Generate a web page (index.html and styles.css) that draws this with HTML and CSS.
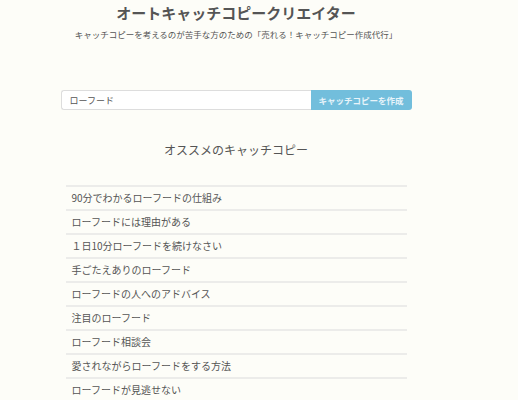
FILE: index.html
```html
<!DOCTYPE html>
<html lang="ja">
<head>
    <meta charset="UTF-8">
    <meta name="viewport" content="width=device-width, initial-scale=1.0">
    <title>オートキャッチコピークリエイター</title>
    <link rel="stylesheet" href="styles.css">
</head>
<body>
  <div class="container">
    <h1 class="title">オートキャッチコピークリエイター</h1>
    <p class="lead">キャッチコピーを考えるのが苦手な方のための「売れる！キャッチコピー作成代行」</p>

    <div class="form-group">
      <input type="text" id="keyword" value="ローフード">
      <button>キャッチコピーを作成</button>
    </div>

    <h2 class="sub-title">オススメのキャッチコピー</h2>
    <ul class="copy-list">
      <li>90分でわかるローフードの仕組み</li>
      <li>ローフードには理由がある</li>
      <li>１日10分ローフードを続けなさい</li>
      <li>手ごたえありのローフード</li>
      <li>ローフードの人へのアドバイス</li>
      <li>注目のローフード</li>
      <li>ローフード相談会</li>
      <li>愛されながらローフードをする方法</li>
      <li>ローフードが見逃せない</li>
    </ul>
  </div>
</body>
</html>
```

FILE: styles.css
```css
body {
    font-family: "Noto Sans CJK JP", "Noto Sans", sans-serif;
    background-color: #fdfdf8;
    color: #555;
    margin: 0;
    padding: 0;
}
.container {
    width: 472px;
    text-align: center;
}
.title {
    font-size: 15px;
    font-weight: bold;
    margin: 0;
    padding-top: 3px;
    line-height: 20px;
    color: #555;
}
.lead {
    font-size: 8.5px;
    margin: 5px 0 0;
    line-height: 12px;
    color: #555;
}
.form-group {
    display: flex;
    width: 351px;
    margin: 50px auto 0;
}
input {
    flex: 1;
    height: 20px;
    box-sizing: border-box;
    padding: 0 8px;
    font-family: inherit;
    font-size: 9px;
    color: #555;
    border: 1px solid #ddd;
    border-right: none;
    border-radius: 3px 0 0 3px;
    background: #fff;
}
button {
    width: 101px;
    height: 20px;
    background-color: #72bedc;
    color: #e8f4fa;
    font-family: inherit;
    font-size: 8.5px;
    font-weight: bold;
    border: none;
    border-radius: 0 3px 3px 0;
    padding: 0;
}
.sub-title {
    font-size: 12px;
    font-weight: normal;
    margin: 32px 0 0;
    line-height: 16px;
}
.copy-list {
    list-style: none;
    width: 341px;
    margin: 27px auto 0;
    padding: 0;
    text-align: left;
}
.copy-list li {
    border-top: 2px solid #ececea;
    height: 22px;
    line-height: 22px;
    padding-left: 6px;
    font-size: 10px;
}
```
